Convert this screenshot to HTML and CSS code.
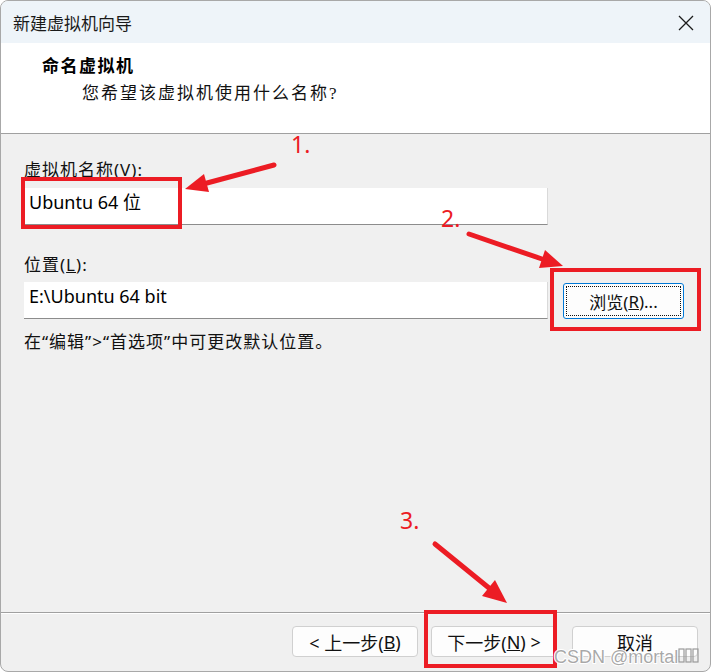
FILE: index.html
```html
<!DOCTYPE html>
<html lang="zh-CN">
<head>
    <meta charset="UTF-8">
    <meta name="viewport" content="width=device-width, initial-scale=1.0">
    <title>新建虚拟机向导</title>
    <link rel="stylesheet" href="styles.css">
</head>
<body>
    <div class="window">
        <div class="titlebar">
            <span class="title">新建虚拟机向导</span>
            <svg class="close" width="16" height="16" viewBox="0 0 16 16">
                <path d="M1 1 L15 15 M15 1 L1 15" stroke="#1b1b1b" stroke-width="1.3" fill="none"/>
            </svg>
        </div>

        <div class="header">
            <div class="heading">命名虚拟机</div>
            <div class="subheading">您希望该虚拟机使用什么名称?</div>
        </div>

        <div class="main">
            <div class="label">虚拟机名称(<u>V</u>):</div>
            <div class="field">Ubuntu 64 位</div>

            <div class="label label-gap">位置(<u>L</u>):</div>
            <div class="row">
                <div class="field field-grow">E:\Ubuntu 64 bit</div>
                <button class="btn btn-browse"><span class="focus">浏览(<u>R</u>)...</span></button>
            </div>

            <div class="hint">在“编辑”&gt;“首选项”中可更改默认位置。</div>
        </div>

        <div class="footer">
            <button class="btn">&lt; 上一步(<u>B</u>)</button>
            <button class="btn">下一步(<u>N</u>) &gt;</button>
            <button class="btn btn-cancel">取消</button>
        </div>
    </div>

    <!-- annotations drawn on top of the screenshot -->
    <svg class="marks" width="713" height="672" viewBox="0 0 713 672">
        <g fill="none" stroke="#ec1c24" stroke-width="4">
            <rect x="23" y="179" width="157" height="48"/>
            <rect x="552" y="270" width="147" height="59"/>
            <rect x="426" y="612" width="129" height="54"/>
        </g>
        <g stroke="#ec1c24" stroke-width="5" stroke-linecap="round">
            <line x1="274" y1="165" x2="207" y2="183"/>
            <line x1="469" y1="234" x2="542" y2="259"/>
            <line x1="435" y1="544" x2="489" y2="588"/>
        </g>
        <g fill="#ec1c24">
            <polygon points="185,189 209,192 204,174"/>
            <polygon points="563,266 539,268 545,250"/>
            <polygon points="507,603 482,596 495,580"/>
        </g>
        <g class="num" fill="#ec1c24">
            <text x="291" y="153">1.</text>
            <text x="441" y="227">2.</text>
            <text x="400" y="529">3.</text>
        </g>
        <g class="wm">
            <text x="554" y="663">CSDN @mortal</text>
        </g>
        <g fill="none" stroke="#9a9a9a" stroke-width="1.2">
            <rect x="679" y="649" width="5" height="13"/>
            <rect x="686" y="649" width="5" height="13"/>
            <rect x="693" y="649" width="5" height="13"/>
        </g>
    </svg>
</body>
</html>
```

FILE: styles.css
```css
* {
    margin: 0;
    padding: 0;
    box-sizing: border-box;
}

body {
    background: #fff;
    width: 713px;
    height: 672px;
    overflow: hidden;
    position: relative;
    font-family: "Noto Sans", "Noto Sans CJK SC", sans-serif;
    color: #1a1a1a;
}

.window {
    width: 711px;
    height: 672px;
    border: 1px solid #a8a8a8;
    border-radius: 8px;
    overflow: hidden;
    display: flex;
    flex-direction: column;
    background: #f0f0f0;
}

.titlebar {
    height: 42px;
    background: #eef4f9;
    display: flex;
    align-items: center;
    justify-content: space-between;
    padding: 0 16px 0 12px;
}

.title {
    font-family: "Noto Sans CJK SC", sans-serif;
    font-size: 17px;
    color: #1a1a1a;
}

.close {
    margin-top: 1px;
}

.header {
    height: 91px;
    background: #fff;
    border-bottom: 1px solid #a0a0a0;
    padding: 12px 0 0 41px;
    font-family: "Liberation Serif", "Noto Sans CJK SC", serif;
}

.heading {
    font-size: 17px;
    font-weight: bold;
    line-height: 24px;
    letter-spacing: 1.5px;
    color: #000;
}

.subheading {
    font-size: 17px;
    line-height: 24px;
    letter-spacing: 2px;
    margin: 3px 0 0 40px;
    color: #111;
}

.main {
    flex: 1;
    padding: 26px 0 0 23px;
}

.label {
    font-size: 17px;
    line-height: 20px;
    letter-spacing: 1px;
    color: #111;
    margin-bottom: 8px;
}

.label-gap {
    margin-top: 30px;
    margin-bottom: 7px;
}

.field {
    width: 524px;
    height: 37px;
    background: #fff;
    border-right: 1px solid #d9d9d9;
    border-bottom: 1px solid #8c8c8c;
    padding: 2px 5px 0;
    font-size: 18px;
    line-height: 24px;
    color: #000;
}

.row {
    display: flex;
    align-items: flex-start;
    gap: 15px;
}

.hint {
    font-size: 17px;
    line-height: 20px;
    letter-spacing: 1px;
    margin-top: 13px;
    color: #111;
}

.btn {
    width: 126px;
    height: 31px;
    background: #fdfdfd;
    border: 1px solid #d0d0d0;
    border-radius: 4px;
    font-family: "Noto Sans", "Noto Sans CJK SC", sans-serif;
    font-size: 18px;
    color: #111;
    display: flex;
    align-items: center;
    justify-content: center;
}

.btn-browse {
    width: 121px;
    height: 36px;
    margin-top: 1px;
    border: 1px solid #0078d7;
    border-radius: 3px;
    padding: 2px;
    font-size: 17px;
}

.focus {
    flex: 1;
    align-self: stretch;
    border: 1px dotted #111;
    display: flex;
    align-items: center;
    justify-content: center;
}

.footer {
    height: 59px;
    border-top: 1px solid #a0a0a0;
    box-shadow: inset 0 1px #fff;
    display: flex;
    justify-content: flex-end;
    align-items: flex-start;
    gap: 13px;
    padding: 13px 12px 0 0;
}

.btn-cancel {
    margin-left: 2px;
}

.marks {
    position: absolute;
    top: 0;
    left: 0;
    pointer-events: none;
}

.num text {
    font-family: "Noto Sans", sans-serif;
    font-size: 23px;
}

.wm text {
    font-family: "Liberation Sans", sans-serif;
    font-size: 18px;
    fill: rgba(140, 140, 140, 0.75);
    stroke: #fff;
    stroke-width: 2px;
    paint-order: stroke;
}
```
